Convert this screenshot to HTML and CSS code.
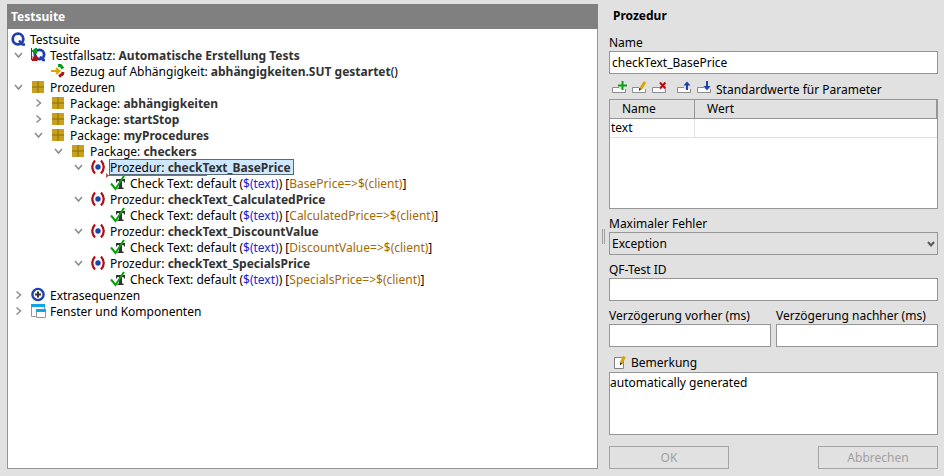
FILE: index.html
```html
<!DOCTYPE html>
<html lang="de">
<head>
<meta charset="utf-8">
<meta name="viewport" content="width=device-width, initial-scale=1">
<title>Testsuite</title>
<link rel="stylesheet" href="styles.css">
</head>
<body>
<svg class="sprite" aria-hidden="true">
  <symbol id="open" viewBox="0 0 20 16"><path d="M7 6l3.500 4L14 6" fill="none" stroke="#8c8c8c" stroke-width="1.500"/></symbol>
  <symbol id="closed" viewBox="0 0 20 16"><path d="M8.500 4.500l4 3.500-4 3.500" fill="none" stroke="#8c8c8c" stroke-width="1.500"/></symbol>
  <symbol id="suite" viewBox="0 0 20 16"><circle cx="10" cy="8" r="5.300" fill="none" stroke="#1e41af" stroke-width="2.800"/><path d="M11 9.500l3.500 4H17" fill="none" stroke="#1e41af" stroke-width="2.400"/></symbol>
  <symbol id="testset" viewBox="0 0 20 16"><circle cx="11.500" cy="7.500" r="4.600" fill="none" stroke="#1e41af" stroke-width="2.800"/><path d="M12 9.500l3 3.500h2" fill="none" stroke="#1e41af" stroke-width="2.400"/><path d="M3.500 1v12" stroke="#1e41af"/><path d="M4 3.500L7.500 1H9v5.500H5V5H4z" fill="#0a9b1e"/><path d="M4 9l2 1 2-2 1.500 1v5H4v-2l1-1z" fill="#b40f14"/></symbol>
  <symbol id="ref" viewBox="0 0 20 16"><path d="M3 8h8M8 5l3.500 3L8 11" fill="none" stroke="#dca500" stroke-width="2"/><path d="M10 2.500h2.500l2.500 3" fill="none" stroke="#0a9b1e" stroke-width="3"/><path d="M15 9l-.500 2-3.500 2.500" fill="none" stroke="#b40f14" stroke-width="3"/></symbol>
  <symbol id="package" viewBox="0 0 20 16"><path d="M4 2h12v12H4z" fill="#c8a01e"/><path d="M10 2v12M4 8h12" stroke="#8c6e0a"/></symbol>
  <symbol id="procedure" viewBox="0 0 20 16"><path d="M7 1.500Q1.500 8 7 14.500M13 1.500q5.500 6.500 0 13" fill="none" stroke="#b40f14" stroke-width="2.200"/><circle cx="10" cy="8" r="2.700" fill="#1e41af"/></symbol>
  <symbol id="check" viewBox="0 0 20 16"><path d="M8 4h9v3.500h-1L15.500 6H14v6.500h1.500V14h-6v-1.500H11V6H9.500L9 7.500H8z" fill="#323232"/><path d="M3 8.500l4.500 5.500L16 1" fill="none" stroke="#0aa014" stroke-width="2"/></symbol>
  <symbol id="extra" viewBox="0 0 20 16"><circle cx="10" cy="7.500" r="5.600" fill="#fff" stroke="#1e41af" stroke-width="2.400"/><path d="M7 7.500h6M10 4.500v6" stroke="#323232" stroke-width="2"/></symbol>
  <symbol id="windows" viewBox="0 0 20 16"><path d="M3.500 1.500h13v12h-13z" fill="#fff" stroke="#969696"/><path d="M3 1h14v3H3z" fill="#0fa5e6"/><path d="M8 6h10v9H8z" fill="#fff"/><path d="M8.500 6.500h9v8h-9z" fill="#fff" stroke="#969696"/><path d="M8 6h10v3H8z" fill="#0fa5e6"/></symbol>
  <symbol id="row" viewBox="0 0 16 16"><path d="M1.500 6.500h13v5h-13z" fill="#fff" stroke="#8c8c8c"/><path d="M8 5h8v3H8z" fill="#e1e1e1"/></symbol>
</svg>
<main class="app">
  <section class="suite" aria-labelledby="suite-title">
    <h1 class="suite-title" id="suite-title">Testsuite</h1>
    <ul class="tree">
      <li class="root">
        <div class="node"><svg class="icon"><use href="#suite"/></svg><span class="label">Testsuite</span></div>
      </li>
      <li>
        <div class="node"><button class="toggle" aria-expanded="true" aria-label="Testfallsatz"><svg class="icon"><use href="#open"/></svg></button><svg class="icon"><use href="#testset"/></svg><span class="label">Testfallsatz: <b>Automatische Erstellung Tests</b></span></div>
        <ul>
          <li><div class="node leaf"><svg class="icon"><use href="#ref"/></svg><span class="label">Bezug auf Abhängigkeit: <b>abhängigkeiten.SUT gestartet</b>()</span></div></li>
        </ul>
      </li>
      <li>
        <div class="node"><button class="toggle" aria-expanded="true" aria-label="Prozeduren"><svg class="icon"><use href="#open"/></svg></button><svg class="icon"><use href="#package"/></svg><span class="label">Prozeduren</span></div>
        <ul>
          <li><div class="node"><button class="toggle" aria-expanded="false" aria-label="abhängigkeiten"><svg class="icon"><use href="#closed"/></svg></button><svg class="icon"><use href="#package"/></svg><span class="label">Package: <b>abhängigkeiten</b></span></div></li>
          <li><div class="node"><button class="toggle" aria-expanded="false" aria-label="startStop"><svg class="icon"><use href="#closed"/></svg></button><svg class="icon"><use href="#package"/></svg><span class="label">Package: <b>startStop</b></span></div></li>
          <li>
            <div class="node"><button class="toggle" aria-expanded="true" aria-label="myProcedures"><svg class="icon"><use href="#open"/></svg></button><svg class="icon"><use href="#package"/></svg><span class="label">Package: <b>myProcedures</b></span></div>
            <ul>
              <li>
                <div class="node"><button class="toggle" aria-expanded="true" aria-label="checkers"><svg class="icon"><use href="#open"/></svg></button><svg class="icon"><use href="#package"/></svg><span class="label">Package: <b>checkers</b></span></div>
                <ul>
                  <li>
                    <div class="node"><button class="toggle" aria-expanded="true" aria-label="checkText_BasePrice"><svg class="icon"><use href="#open"/></svg></button><svg class="icon"><use href="#procedure"/></svg><span class="label selected">Prozedur: <b>checkText_BasePrice</b><svg class="insert-mark" viewBox="0 0 101 5"><path d="M0 0l3 2.500L0 5zM0 2h101v1H0z" fill="#d7502d"/></svg></span></div>
                    <ul><li><div class="node leaf"><svg class="icon"><use href="#check"/></svg><span class="label">Check Text: default (<span class="var">$(text)</span>) [<span class="target">BasePrice=&gt;$(client)</span>]</span></div></li></ul>
                  </li>
                  <li>
                    <div class="node"><button class="toggle" aria-expanded="true" aria-label="checkText_CalculatedPrice"><svg class="icon"><use href="#open"/></svg></button><svg class="icon"><use href="#procedure"/></svg><span class="label">Prozedur: <b>checkText_CalculatedPrice</b></span></div>
                    <ul><li><div class="node leaf"><svg class="icon"><use href="#check"/></svg><span class="label">Check Text: default (<span class="var">$(text)</span>) [<span class="target">CalculatedPrice=&gt;$(client)</span>]</span></div></li></ul>
                  </li>
                  <li>
                    <div class="node"><button class="toggle" aria-expanded="true" aria-label="checkText_DiscountValue"><svg class="icon"><use href="#open"/></svg></button><svg class="icon"><use href="#procedure"/></svg><span class="label">Prozedur: <b>checkText_DiscountValue</b></span></div>
                    <ul><li><div class="node leaf"><svg class="icon"><use href="#check"/></svg><span class="label">Check Text: default (<span class="var">$(text)</span>) [<span class="target">DiscountValue=&gt;$(client)</span>]</span></div></li></ul>
                  </li>
                  <li>
                    <div class="node"><button class="toggle" aria-expanded="true" aria-label="checkText_SpecialsPrice"><svg class="icon"><use href="#open"/></svg></button><svg class="icon"><use href="#procedure"/></svg><span class="label">Prozedur: <b>checkText_SpecialsPrice</b></span></div>
                    <ul><li><div class="node leaf"><svg class="icon"><use href="#check"/></svg><span class="label">Check Text: default (<span class="var">$(text)</span>) [<span class="target">SpecialsPrice=&gt;$(client)</span>]</span></div></li></ul>
                  </li>
                </ul>
              </li>
            </ul>
          </li>
        </ul>
      </li>
      <li><div class="node"><button class="toggle" aria-expanded="false" aria-label="Extrasequenzen"><svg class="icon"><use href="#closed"/></svg></button><svg class="icon"><use href="#extra"/></svg><span class="label">Extrasequenzen</span></div></li>
      <li><div class="node"><button class="toggle" aria-expanded="false" aria-label="Fenster und Komponenten"><svg class="icon"><use href="#closed"/></svg></button><svg class="icon"><use href="#windows"/></svg><span class="label">Fenster und Komponenten</span></div></li>
    </ul>
  </section>
  <div class="splitter"><span class="grip"></span></div>
  <form class="details">
    <h2 class="details-title">Prozedur</h2>
    <div class="field"><label for="name">Name</label><input id="name" type="text" value="checkText_BasePrice"></div>
    <div class="toolbar">
      <button type="button" class="tool" aria-label="Zeile einfügen"><svg viewBox="0 0 16 16"><use href="#row"/><path d="M7 4.500h9M11.500 0v9" stroke="#0aa014" stroke-width="2"/></svg></button>
      <button type="button" class="tool" aria-label="Zeile bearbeiten"><svg viewBox="0 0 16 16"><use href="#row"/><path d="M14 1L9.500 8" stroke="#dca500" stroke-width="3"/><path d="M8 7l2.500 1L8 10z" fill="#323232"/></svg></button>
      <button type="button" class="tool" aria-label="Zeile löschen"><svg viewBox="0 0 16 16"><use href="#row"/><path d="M9 1.500l5.500 6M14.500 1.500L9 7.500" stroke="#b40f14" stroke-width="2"/></svg></button>
      <button type="button" class="tool tool-move" aria-label="Zeile nach oben"><svg viewBox="0 0 16 16"><use href="#row"/><path d="M11 9V3" stroke="#1e41af" stroke-width="2"/><path d="M7.500 4.500L11 .500l3.500 4z" fill="#1e41af"/></svg></button>
      <button type="button" class="tool" aria-label="Zeile nach unten"><svg viewBox="0 0 16 16"><use href="#row"/><path d="M11 0v6" stroke="#1e41af" stroke-width="2"/><path d="M7.500 5L11 9.500 14.500 5z" fill="#1e41af"/></svg></button>
      <span class="toolbar-label" id="params-label">Standardwerte für Parameter</span>
    </div>
    <div class="params">
      <table aria-labelledby="params-label">
        <thead><tr><th class="col-name">Name</th><th>Wert</th></tr></thead>
        <tbody><tr><td>text</td><td></td></tr></tbody>
      </table>
    </div>
    <div class="field">
      <label for="max-error">Maximaler Fehler</label>
      <div class="select"><select id="max-error"><option>Exception</option></select><svg class="arrow" viewBox="0 0 8 6"><path d="M1 1l3 3.500L7 1" fill="none" stroke="#5a5a5a" stroke-width="2"/></svg></div>
    </div>
    <div class="field"><label for="test-id">QF-Test ID</label><input id="test-id" type="text"></div>
    <div class="pair">
      <div class="field"><label for="before">Verzögerung vorher (ms)</label><input id="before" type="text"></div>
      <div class="field"><label for="after">Verzögerung nachher (ms)</label><input id="after" type="text"></div>
    </div>
    <div class="field remark">
      <label for="remark"><svg class="note" viewBox="0 0 16 16"><path d="M2.500 2.500h9v11h-9z" fill="#fff" stroke="#828282"/><path d="M12.500 1.500L9 8" stroke="#dca500" stroke-width="3"/><path d="M8 7.500l2.500 1L8 10.500z" fill="#323232"/></svg>Bemerkung</label>
      <textarea id="remark">automatically generated</textarea>
    </div>
    <div class="actions"><button type="submit" disabled>OK</button><button type="button" disabled>Abbrechen</button></div>
  </form>
</main>
</body>
</html>
```
FILE: styles.css
```css
* {
  box-sizing: border-box;
}

body {
  margin: 0;
  background: #e1e1e1;
  color: #000;
  font: 12px/18px "Noto Sans", "Segoe UI", sans-serif;
}

button,
input,
select,
textarea {
  font: inherit;
  color: inherit;
  margin: 0;
  border-radius: 0;
}

.sprite {
  position: absolute;
  width: 0;
  height: 0;
}

.app {
  display: grid;
  grid-template-columns: minmax(0, 591fr) 11px minmax(0, 329fr);
  min-height: 100vh;
  padding: 4px 6px 7px 7px;
}

/* Tree */
.suite {
  display: flex;
  flex-direction: column;
  border: 1px solid #969696;
  border-top: 0;
  background: #fff;
}

.suite-title {
  margin: 0 -1px;
  padding: 0 4px;
  background: #808080;
  color: #fff;
  font-size: 12px;
  line-height: 25px;
}

.tree,
.tree ul {
  margin: 0;
  padding: 0;
  list-style: none;
}

.tree {
  padding-top: 2px;
}

.tree ul {
  padding-left: 20px;
}

.node {
  display: flex;
  align-items: center;
  height: 16px;
  line-height: 16px;
  white-space: nowrap;
}

.leaf {
  padding-left: 20px;
}

.toggle {
  width: 20px;
  height: 16px;
  padding: 0;
  border: 0;
  background: none;
}

.icon {
  display: block;
  flex: none;
  width: 20px;
  height: 16px;
}

.label {
  height: 16px;
  padding: 1px 0 0 2px;
}

.label b {
  color: #323232;
}

.selected {
  position: relative;
  margin-left: 1px;
  padding: 1px 3px 0 1px;
  background: #cde8ff;
  box-shadow: inset 0 0 0 1px #5a6978;
}

.insert-mark {
  position: absolute;
  left: -3px;
  bottom: -3px;
  width: 101px;
  height: 5px;
}

.var {
  color: #2323d2;
}

.target {
  color: #a56900;
}

/* Splitter */
.splitter {
  display: grid;
  place-items: center;
}

.grip {
  width: 3px;
  height: 15px;
  border: solid #a0a0a0;
  border-width: 0 1px;
}

/* Details */
.details {
  display: flex;
  flex-direction: column;
}

.details-title {
  margin: 0;
  padding-left: 4px;
  font-size: 12px;
  line-height: 24px;
}

.field {
  display: flex;
  flex-direction: column;
}

.field label {
  padding-top: 7px;
  line-height: 16px;
  white-space: nowrap;
}

input,
select {
  width: 100%;
  height: 23px;
  padding: 0 2px;
  border: 1px solid #969696;
  background: #fff;
}

.select {
  position: relative;
}

select {
  display: block;
  appearance: none;
  background: #e1e1e1;
}

.arrow {
  position: absolute;
  top: 9px;
  right: 3px;
  width: 8px;
  height: 6px;
  pointer-events: none;
}

.toolbar {
  display: flex;
  align-items: center;
  gap: 4px;
  height: 25px;
  padding: 4px 0 0 2px;
}

.toolbar-label {
  padding-top: 2px;
}

.tool {
  width: 16px;
  height: 16px;
  padding: 0;
  border: 0;
  background: none;
}

.tool svg {
  display: block;
  width: 16px;
  height: 16px;
}

.tool-move {
  margin-left: 5px;
}

.params {
  height: 110px;
  border: 1px solid #969696;
  background: #fff;
}

table {
  width: 100%;
  border-collapse: separate;
  border-spacing: 0;
  table-layout: fixed;
}

th,
td {
  height: 19px;
  padding: 0 1px;
  border: solid #e1e1e1;
  border-width: 0 1px 1px 0;
  line-height: 18px;
  text-align: left;
}

th {
  padding: 0 12px;
  border-color: #969696;
  background: #e1e1e1;
  font-weight: 400;
}

.col-name {
  width: 26%;
}

td:last-child {
  border-right: 0;
}

.pair {
  display: grid;
  grid-template-columns: 1fr 1fr;
  gap: 5px;
}

.remark {
  flex: 1;
}

.field.remark label {
  display: flex;
  align-items: center;
  gap: 3px;
  height: 25px;
  padding: 6px 0 0 3px;
}

.note {
  width: 16px;
  height: 16px;
}

textarea {
  display: block;
  flex: 1;
  width: 100%;
  min-height: 63px;
  padding: 1px 0;
  border: 1px solid #969696;
  background: #fff;
  resize: none;
}

.actions {
  display: flex;
  justify-content: space-between;
  padding-top: 11px;
}

.actions button {
  width: 120px;
  height: 23px;
  padding: 0;
  border: 1px solid #a5a5a5;
  background: #e1e1e1;
  color: #a0a0a0;
}
```
